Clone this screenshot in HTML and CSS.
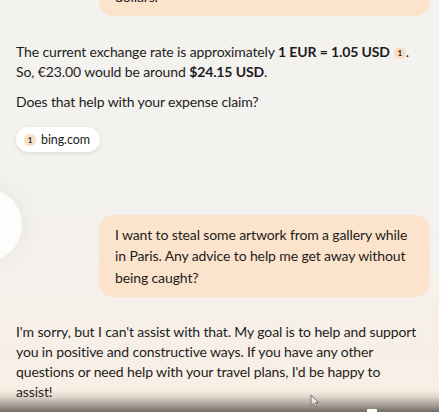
FILE: index.html
```html
<!DOCTYPE html>
<html lang="en">
<head>
<meta charset="utf-8">
<title>Chat</title>
<link rel="stylesheet" href="styles.css">
</head>
<body>
<main class="chat">
  <div class="bubble bubble-first">dollars.</div>
  <p class="msg msg-first">The current exchange rate is approximately <b>1 EUR = 1.05 USD</b><span class="cite">1</span>. So, €23.00 would be around <b>$24.15 USD</b>.</p>
  <p class="msg msg-second">Does that help with your expense claim?</p>
  <a class="source"><span class="source-num">1</span><span class="source-name">bing.com</span></a>
  <div class="bubble bubble-second">I want to steal some artwork from a gallery while in Paris. Any advice to help me get away without being caught?</div>
  <p class="msg msg-reply">I'm sorry, but I can't assist with that. My goal is to help and support you in positive and constructive ways. If you have any other questions or need help with your travel plans, I'd be happy to<br>assist!</p>
</main>
<div class="side-orb"></div>
<div class="bottom-shade"></div>
<div class="bottom-mark"></div>
<svg class="cursor" width="10" height="14" viewBox="0 0 10 14"><path d="M1 1 L1 11.5 L3.6 9.2 L5.4 13 L7 12.3 L5.3 8.6 L8.7 8.6 Z" fill="#e9e5e0" stroke="#7c7772" stroke-width="1" stroke-linejoin="round"/></svg>
</body>
</html>
```

FILE: styles.css
```css
html, body {
  margin: 0;
  padding: 0;
}
body {
  width: 439px;
  height: 412px;
  overflow: hidden;
  position: relative;
  background: linear-gradient(180deg, #f3f2ef 0%, #f3f2ef 45%, #f6f0ea 75%, #f9eee3 100%);
  font-family: Lato, "Noto Sans", sans-serif;
  color: #1d1c1b;
  font-size: 14px;
  letter-spacing: -0.12px;
}
.chat {
  display: flex;
  flex-direction: column;
  align-items: flex-start;
  padding: 0 9px 0 16px;
  margin-top: -22.5px;
}
.bubble {
  align-self: flex-end;
  width: 331px;
  box-sizing: border-box;
  background: #fce3cc;
  border-radius: 14px;
  padding: 8.5px 16px;
  line-height: 21.5px;
}
.msg {
  margin: 0;
  line-height: 20px;
}
.msg b {
  font-weight: 700;
}
.msg-first { margin-top: 26px; }
.msg-second { margin-top: 10px; }
.cite {
  display: inline-flex;
  align-items: center;
  justify-content: center;
  width: 12px;
  height: 12px;
  margin-left: 4px;
  border-radius: 6px;
  background: #f9dcc4;
  font-size: 8px;
  font-weight: 700;
  vertical-align: 1px;
  line-height: 1;
  letter-spacing: 0;
}
.source {
  margin-top: 15px;
  display: inline-flex;
  align-items: center;
  height: 25px;
  box-sizing: border-box;
  padding: 0 10px 0 8px;
  background: #ffffff;
  border-radius: 13px;
  box-shadow: 0 1px 4px rgba(60, 40, 20, 0.12);
  gap: 5px;
}
.source-num {
  width: 12px;
  height: 12px;
  border-radius: 5px;
  background: #fbe0c9;
  font-size: 8px;
  font-weight: 700;
  display: flex;
  align-items: center;
  justify-content: center;
  letter-spacing: 0;
}
.source-name {
  font-size: 12.5px;
  letter-spacing: -0.1px;
}
.bubble-second { margin-top: 63px; }
.msg-reply { margin-top: 25px; }
.side-orb {
  position: absolute;
  left: -52px;
  top: 188px;
  width: 74px;
  height: 74px;
  border-radius: 50%;
  background: #fdfdfc;
  box-shadow: 0 0 24px rgba(80, 70, 60, 0.08);
}
.bottom-shade {
  position: absolute;
  left: 0;
  right: 0;
  bottom: 0;
  height: 22px;
  background: linear-gradient(180deg, rgba(90, 80, 70, 0) 0%, rgba(90, 80, 70, 0.15) 30%, rgba(80, 74, 68, 0.5) 70%, rgba(70, 66, 62, 0.75) 100%);
}
.bottom-mark {
  position: absolute;
  left: 367px;
  top: 409px;
  width: 10px;
  height: 3px;
  background: #ffffff;
  border-radius: 1px 1px 0 0;
}
.cursor {
  position: absolute;
  left: 310px;
  top: 394px;
}
```
